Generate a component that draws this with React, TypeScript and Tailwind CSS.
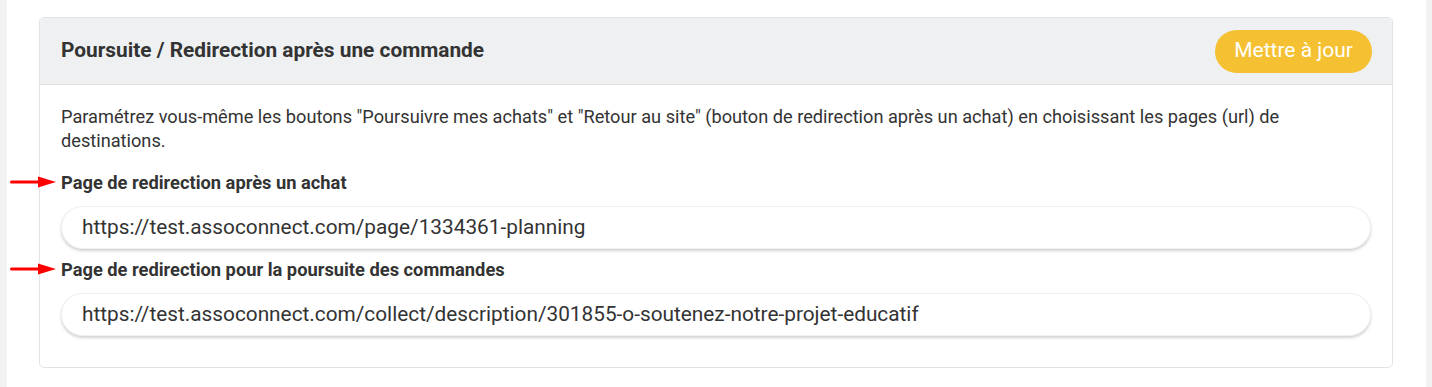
import React from "react";

function Arrow() {
  return (
    <svg width="46" height="14" viewBox="0 0 46 14" className="absolute left-[-51px] top-[4px]">
      <line x1="1.5" y1="7" x2="32" y2="7" stroke="#ff0000" strokeWidth="3" strokeLinecap="round" />
      <polygon points="28,1.5 46,7 28,12.5" fill="#ff0000" />
    </svg>
  );
}

function Field({ label, value }: { label: string; value: string }) {
  return (
    <div className="flex flex-col">
      <div className="relative text-[18.3px] leading-[24px] font-bold text-[#333]">
        <Arrow />
        {label}
      </div>
      <div className="mt-[11px] h-[43px] rounded-full bg-white border border-[#f0f0f0] shadow-[0_2px_3px_rgba(0,0,0,0.18)] flex items-center px-[20px] text-[20.8px] text-[#333]">
        {value}
      </div>
    </div>
  );
}

export default function App() {
  return (
    <div className="flex w-[1432px] h-[387px] bg-white font-['Roboto',sans-serif]">
      <div className="w-[7px] bg-[#f2f2f2]" />
      <div className="flex-1 pl-[32px] pr-[33px] pt-[17px]">
        <div className="border border-[#e3e3e3] rounded-[5px]">
          <div className="bg-[#eef0f1] border-b border-[#e2e2e2] rounded-t-[5px] h-[67px] flex items-center justify-between pl-[21px] pr-[20px]">
            <div className="text-[20.85px] font-bold text-[#333]">Poursuite / Redirection après une commande</div>
            <button className="h-[43px] px-[19px] rounded-full bg-[#f5c132] text-white text-[21px]">Mettre à jour</button>
          </div>
          <div className="px-[21px] pt-[20px] pb-[31px] bg-white rounded-b-[5px]">
            <p className="text-[18.2px] leading-[24px] text-[#333]">
              Paramétrez vous-même les boutons "Poursuivre mes achats" et "Retour au site" (bouton de redirection après un achat) en choisissant les pages (url) de destinations.
            </p>
            <div className="mt-[18px] flex flex-col gap-[9px]">
              <Field label="Page de redirection après un achat" value="https://test.assoconnect.com/page/1334361-planning" />
              <Field label="Page de redirection pour la poursuite des commandes" value="https://test.assoconnect.com/collect/description/301855-o-soutenez-notre-projet-educatif" />
            </div>
          </div>
        </div>
      </div>
      <div className="w-[6px] bg-[#f2f2f2]" />
    </div>
  );
}
